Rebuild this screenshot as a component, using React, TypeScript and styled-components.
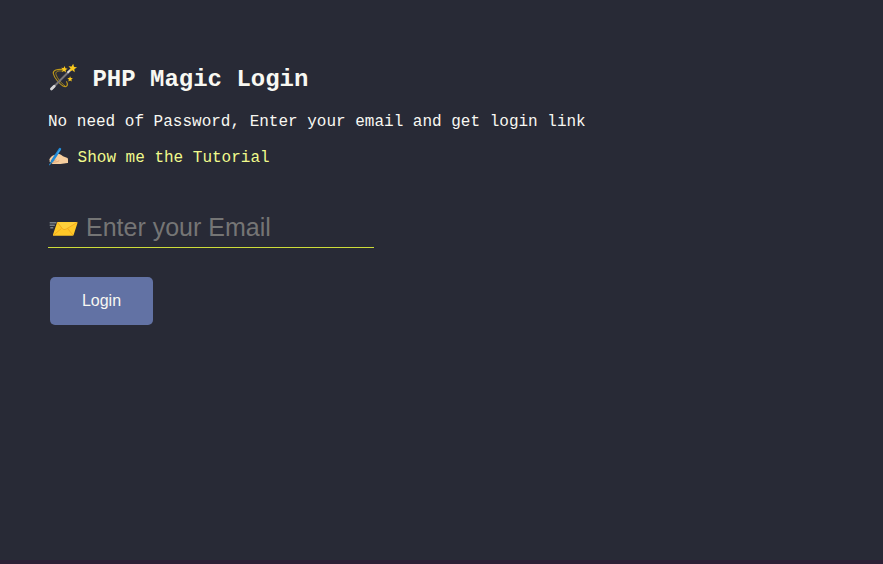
import React from "react";
import styled, { createGlobalStyle } from "styled-components";

const Global = createGlobalStyle`
  * { box-sizing: border-box; }
  body {
    margin: 0;
    background: #282a36;
    color: #f8f8f2;
    font: 16px/18px "Liberation Mono", monospace;
  }
`;
const Page = styled.main`
  height: 564px;
  padding: 66px 48px 0;
  border-bottom: 4px solid #2d2035;
`;
const Icon = styled.svg<{ $gap: number; $lift?: number }>`
  display: block;
  flex: none;
  margin-right: ${(p) => p.$gap}px;
  margin-top: ${(p) => -(p.$lift ?? 0)}px;
`;
const Title = styled.h1`
  display: flex;
  margin: 0;
  font-size: 24px;
  line-height: 28px;
  height: 28px;
`;
const Text = styled.p`
  margin: 19px 0 18px;
`;
const Tutorial = styled.a`
  display: flex;
  height: 18px;
  color: #f1fa8c;
  text-decoration: none;
`;
const EmailField = styled.label`
  display: flex;
  align-items: center;
  width: 326px;
  height: 40px;
  margin: 41px 0 29px;
  border-bottom: 1px solid #cddc39;
`;
const Email = styled.input`
  flex: 1;
  min-width: 0;
  height: 39px;
  padding: 0;
  border: 0;
  background: transparent;
  color: #f8f8f2;
  font: 25px "Liberation Sans", sans-serif;
  outline: none;
  &::placeholder { color: #757575; }
`;
const Button = styled.button`
  width: 103px;
  height: 48px;
  margin-left: 2px;
  padding: 0 0 1px;
  border: 0;
  border-radius: 5px;
  background: #6272a4;
  color: #f8f8f2;
  font: 16px "Liberation Sans", sans-serif;
`;

const STAR = "M0-5 1.4-1.6 5-1.4 2.2 1 3.1 4.6 0 2.6-3.1 4.6-2.2 1-5-1.4-1.4-1.6Z";

const Wand = () => (
  <Icon $gap={14.4} $lift={2} width="30" height="30" viewBox="0 0 30 30">
    <g fill="none" stroke="#bd981a" strokeWidth="1.1" strokeLinecap="round">
      <path d="M14.5 5.5C9.5 4.8 4.7 6.5 5.3 9.5C6 13.5 11.5 20 15 22C18.4 23.6 20.7 21.5 18.6 17.7" />
      <path d="M14 7C10 6.4 7 7.8 8 10.5C9 14 13.5 19.5 17 22" strokeWidth=".8" />
    </g>
    <path d="M4 24.5 23.5 5" stroke="#777579" strokeWidth="2" strokeLinecap="round" />
    <path d="M3.4 24.9 6.2 22.2" stroke="#d5d5d8" strokeWidth="2.8" strokeLinecap="round" />
    <path d="M19.5 8.8 22.8 5.6" stroke="#dedcdc" strokeWidth="1.9" />
    <g fill="#fbc91c">
      <path transform="translate(24.6 4) scale(.86) rotate(8)" d={STAR} />
      <path transform="translate(16.3 5.2) scale(.66) rotate(8)" d={STAR} />
      <path transform="translate(22.1 15) scale(.55)" d={STAR} />
    </g>
  </Icon>
);

const WritingHand = () => (
  <Icon $gap={7.6} $lift={3} width="22" height="22" viewBox="0 0 22 22">
    <path d="M2 12.2C3.2 10 6 9 9.2 7.8C11.5 7.5 13 8.8 15 10.2L19.5 12Q20 12.5 20 13.5V17C17.5 16.8 15.3 18 12.5 18H5C3.6 18 3 17 3.5 16.3L2 16Q.9 15.4 1.7 14.6Q.8 13.6 2 12.2Z" fill="#f6ce9f" />
    <path d="M5.5 15 8.5 13.7M4.5 16.5 9.3 15.7M9.3 15.7 11.2 14.7" fill="none" stroke="#d99a6c" strokeWidth=".7" />
    <path d="M11.9 3.2 4 15.3" stroke="#1e88d5" strokeWidth="2.6" strokeLinecap="round" />
    <path d="M12 3.5 9.3 7.7" stroke="#4eb3ee" strokeWidth=".9" />
    <path d="M3.8 15.2 1.6 18.7" stroke="#2485c6" strokeWidth="1.2" strokeLinecap="round" />
  </Icon>
);

const Envelope = () => (
  <Icon $gap={6} $lift={-2} width="32" height="24" viewBox="0 0 32 24">
    <path d="M1.7 5.8H8.5M1.7 8.3H6.8M2.3 10.7H5.3" stroke="#788087" strokeWidth="1.4" />
    <path d="M10 5H28.6Q29.8 5 29.4 6.2L25.7 17.8Q25.4 18.8 24.3 18.8H5.8Q4.6 18.8 5 17.6L8.9 5.9Q9.2 5 10 5Z" fill="#ffc928" />
    <path d="M9.5 5.3H29.2L18.4 12.2Q16.5 13.3 15 12.2Z" fill="#ffd03b" />
    <path d="M9.5 5.4 14.3 11.6Q15.8 13.4 18.2 12.1L29.2 5.4M5.3 18.2 13.5 11.5M19.5 11.4 25 18.2" fill="none" stroke="#f4a21b" strokeWidth=".8" />
  </Icon>
);

export default function App() {
  return (
    <Page>
      <Global />
      <Title><Wand />PHP Magic Login</Title>
      <Text>No need of Password, Enter your email and get login link</Text>
      <Tutorial href="#"><WritingHand />Show me the Tutorial</Tutorial>
      <EmailField>
        <Envelope />
        <Email type="email" placeholder="Enter your Email" />
      </EmailField>
      <Button>Login</Button>
    </Page>
  );
}
